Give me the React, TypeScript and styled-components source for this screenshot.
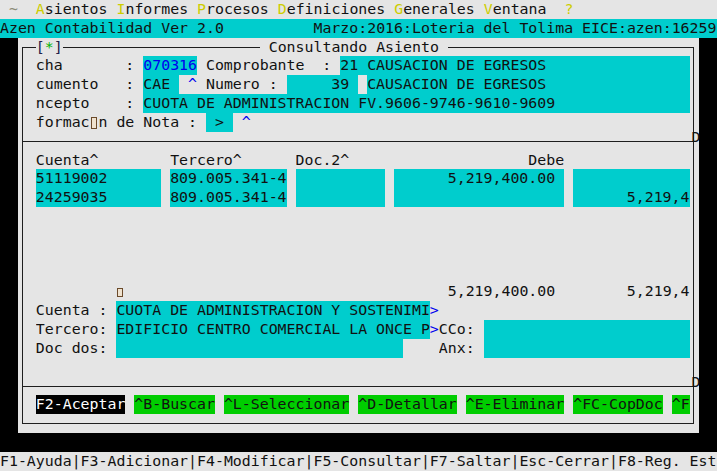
import React from "react";
import styled, { createGlobalStyle } from "styled-components";

// 80 x 25 console grid
const ROW = 471 / 25;

const GRAY = "#e5e5e5";
const CYAN = "#00cdcd";
const GREEN = "#00cd00";
const BLUE = "#0000ee";
const YELLOW = "#cdcd00";
const LINE = "#1e1e1e";

const GlobalStyle = createGlobalStyle`
  html, body {
    margin: 0;
    padding: 0;
    background: #000;
    overflow: hidden;
  }
`;

const Screen = styled.div`
  width: 717px;
  height: 471px;
  overflow: hidden;
  background: #000;
  font-family: "DejaVu Sans Mono", monospace;
  font-size: 14.887px;
  line-height: ${ROW}px;
  white-space: pre;
  color: #111;
`;

const Line = styled.div<{ $bg?: string }>`
  display: flex;
  height: ${ROW}px;
  background: ${(p) => p.$bg || "transparent"};
`;

const Text = styled.span<{ $w?: number; $right?: boolean }>`
  flex: none;
  display: inline-block;
  width: ${(p) => (p.$w !== undefined ? `${p.$w}ch` : "auto")};
  height: ${ROW}px;
  text-align: ${(p) => (p.$right ? "right" : "left")};
  overflow: hidden;
`;

const Gap = styled.span<{ $w: number }>`
  flex: none;
  width: ${(p) => p.$w}ch;
`;

const Field = styled(Text)<{ $fg?: string }>`
  background: ${CYAN};
  color: ${(p) => p.$fg || "#111"};
`;

const Hint = styled.span`
  color: ${BLUE};
`;

const Hot = styled.span`
  color: ${YELLOW};
`;

const Tilde = styled.span`
  color: #8c8c78;
`;

/* glyph the console font could not draw */
const Missing = styled.span<{ $h: number }>`
  display: inline-block;
  width: 1ch;
  height: ${ROW}px;
  vertical-align: top;
  position: relative;
  &::after {
    content: "";
    position: absolute;
    left: 1px;
    width: 6px;
    height: ${(p) => p.$h}px;
    top: ${(p) => (ROW - p.$h) / 2 + 1}px;
    border: 1px solid #6b4a2a;
    background: #efe2cf;
    box-sizing: border-box;
  }
`;

const Desk = styled.div`
  display: flex;
  height: ${ROW * 21}px;
`;

const Margin = styled.div<{ $w?: number }>`
  flex: ${(p) => (p.$w ? "none" : "1")};
  width: ${(p) => (p.$w ? `${p.$w}ch` : "auto")};
  background: #000;
`;

const Window = styled.div`
  flex: none;
  width: 76ch;
  background: ${GRAY};
  position: relative;
  z-index: 0;
  &::before {
    content: "";
    position: absolute;
    z-index: -1;
    left: 0.5ch;
    right: 0.5ch;
    top: ${ROW / 2}px;
    bottom: ${ROW / 2}px;
    border: 1px solid ${LINE};
  }
`;

const Tag = styled.span`
  background: ${GRAY};
  color: #22224a;
`;

const Star = styled.span`
  color: #00b400;
`;

const Caption = styled.span`
  background: ${GRAY};
  color: #111;
`;

const Rule = styled.div`
  display: flex;
  height: ${ROW}px;
  position: relative;
  &::before {
    content: "";
    position: absolute;
    left: 0.5ch;
    right: 0.5ch;
    top: ${ROW / 2}px;
    border-top: 1px solid ${LINE};
  }
`;

const RuleEnd = styled.span`
  margin-left: auto;
  width: 1ch;
  position: relative;
  left: 2px;
  top: -4px;
  color: #111;
`;

const Key = styled.span<{ $active?: boolean }>`
  flex: none;
  background: ${(p) => (p.$active ? "#000" : GREEN)};
  color: ${(p) => (p.$active ? "#fff" : "#111")};
`;

const StatusBar = styled(Line)`
  color: #111;
`;

const menu = ["Asientos", "Informes", "Procesos", "Definiciones", "Generales", "Ventana"];

const rows = [
  { cuenta: "51119002", tercero: "809.005.341-4", debe: "5,219,400.00", haber: "" },
  { cuenta: "24259035", tercero: "809.005.341-4", debe: "", haber: "5,219,4" },
];

const keys = ["^B-Buscar", "^L-Seleccionar", "^D-Detallar", "^E-Eliminar", "^FC-CopDoc", "^F"];

export default function App() {
  return (
    <Screen>
      <GlobalStyle />
      <Line $bg={GRAY}>
        <Text>
          {" "}
          <Tilde>~</Tilde>
          {"  "}
          {menu.map((m) => (
            <React.Fragment key={m}>
              <Hot>{m[0]}</Hot>
              {m.slice(1) + " "}
            </React.Fragment>
          ))}
          {" "}
          <Hot>?</Hot>
        </Text>
      </Line>
      <Line $bg={CYAN}>
        <Text $w={35}>Azen Contabilidad Ver 2.0</Text>
        <Text>Marzo:2016:Loteria del Tolima EICE:azen:16259</Text>
      </Line>

      <Desk>
        <Margin $w={2} />
        <Window>
          <Line>
            <Gap $w={2} />
            <Tag>
              [<Star>*</Star>]
            </Tag>
            <Gap $w={22} />
            <Caption> Consultando Asiento </Caption>
          </Line>
          <Line>
            <Gap $w={2} />
            <Text $w={10}>cha</Text>
            <Text $w={2}>:</Text>
            <Field $w={6} $fg={BLUE}>070316</Field>
            <Text $w={16}> Comprobante  : </Text>
            <Field $w={39}>21 CAUSACION DE EGRESOS</Field>
          </Line>
          <Line>
            <Gap $w={2} />
            <Text $w={10}>cumento</Text>
            <Text $w={2}>:</Text>
            <Field $w={4}>CAE</Field>
            <Text $w={12}>
              {" "}
              <Hint>^</Hint> Numero :{" "}
            </Text>
            <Field $w={8}>{"     39 "}</Field>
            <Gap $w={1} />
            <Field $w={36}>CAUSACION DE EGRESOS</Field>
          </Line>
          <Line>
            <Gap $w={2} />
            <Text $w={10}>ncepto</Text>
            <Text $w={2}>:</Text>
            <Field $w={61}>CUOTA DE ADMINISTRACION FV.9606-9746-9610-9609</Field>
          </Line>
          <Line>
            <Gap $w={2} />
            <Text $w={19}>
              formac<Missing $h={12} />n de Nota :{" "}
            </Text>
            <Field $w={3}> &gt; </Field>
            <Text $w={1}> </Text>
            <Hint>^</Hint>
          </Line>
          <Rule>
            <RuleEnd>D</RuleEnd>
          </Rule>
          <Line>
            <Gap $w={2} />
            <Text $w={15}>Cuenta^</Text>
            <Text $w={14}>Tercero^</Text>
            <Text $w={11}>Doc.2^</Text>
            <Text $w={19} $right>
              Debe
            </Text>
          </Line>
          {rows.map((r) => (
            <Line key={r.cuenta}>
              <Gap $w={2} />
              <Field $w={14}>{r.cuenta}</Field>
              <Gap $w={1} />
              <Field $w={13}>{r.tercero}</Field>
              <Gap $w={1} />
              <Field $w={10} />
              <Gap $w={1} />
              <Field $w={19} $right>
                {r.debe ? r.debe + " " : ""}
              </Field>
              <Gap $w={1} />
              <Field $w={13} $right>
                {r.haber}
              </Field>
            </Line>
          ))}
          <Line />
          <Line />
          <Line />
          <Line />
          <Line>
            <Gap $w={11} />
            <Missing $h={9} />
            <Gap $w={36} />
            <Text $w={12}>5,219,400.00</Text>
            <Gap $w={8} />
            <Text $w={7}>5,219,4</Text>
          </Line>
          <Line>
            <Gap $w={2} />
            <Text $w={9}>Cuenta : </Text>
            <Field $w={35}>CUOTA DE ADMINISTRACION Y SOSTENIMI</Field>
            <Hint>&gt;</Hint>
          </Line>
          <Line>
            <Gap $w={2} />
            <Text $w={9}>Tercero: </Text>
            <Field $w={35}>EDIFICIO CENTRO COMERCIAL LA ONCE P</Field>
            <Text $w={1}>
              <Hint>&gt;</Hint>
            </Text>
            <Text $w={5}>CCo: </Text>
            <Field $w={23} />
          </Line>
          <Line>
            <Gap $w={2} />
            <Text $w={9}>Doc dos: </Text>
            <Field $w={32} />
            <Gap $w={4} />
            <Text $w={5}>Anx: </Text>
            <Field $w={23} />
          </Line>
          <Line />
          <Rule>
            <RuleEnd>D</RuleEnd>
          </Rule>
          <Line>
            <Gap $w={2} />
            <Key $active>F2-Aceptar</Key>
            {keys.map((k) => (
              <React.Fragment key={k}>
                <Gap $w={1} />
                <Key>{k}</Key>
              </React.Fragment>
            ))}
          </Line>
          <Line />
        </Window>
        <Margin />
      </Desk>

      <Line />
      <StatusBar $bg={GRAY}>
        <Text>F1-Ayuda|F3-Adicionar|F4-Modificar|F5-Consultar|F7-Saltar|Esc-Cerrar|F8-Reg. Est</Text>
      </StatusBar>
    </Screen>
  );
}
